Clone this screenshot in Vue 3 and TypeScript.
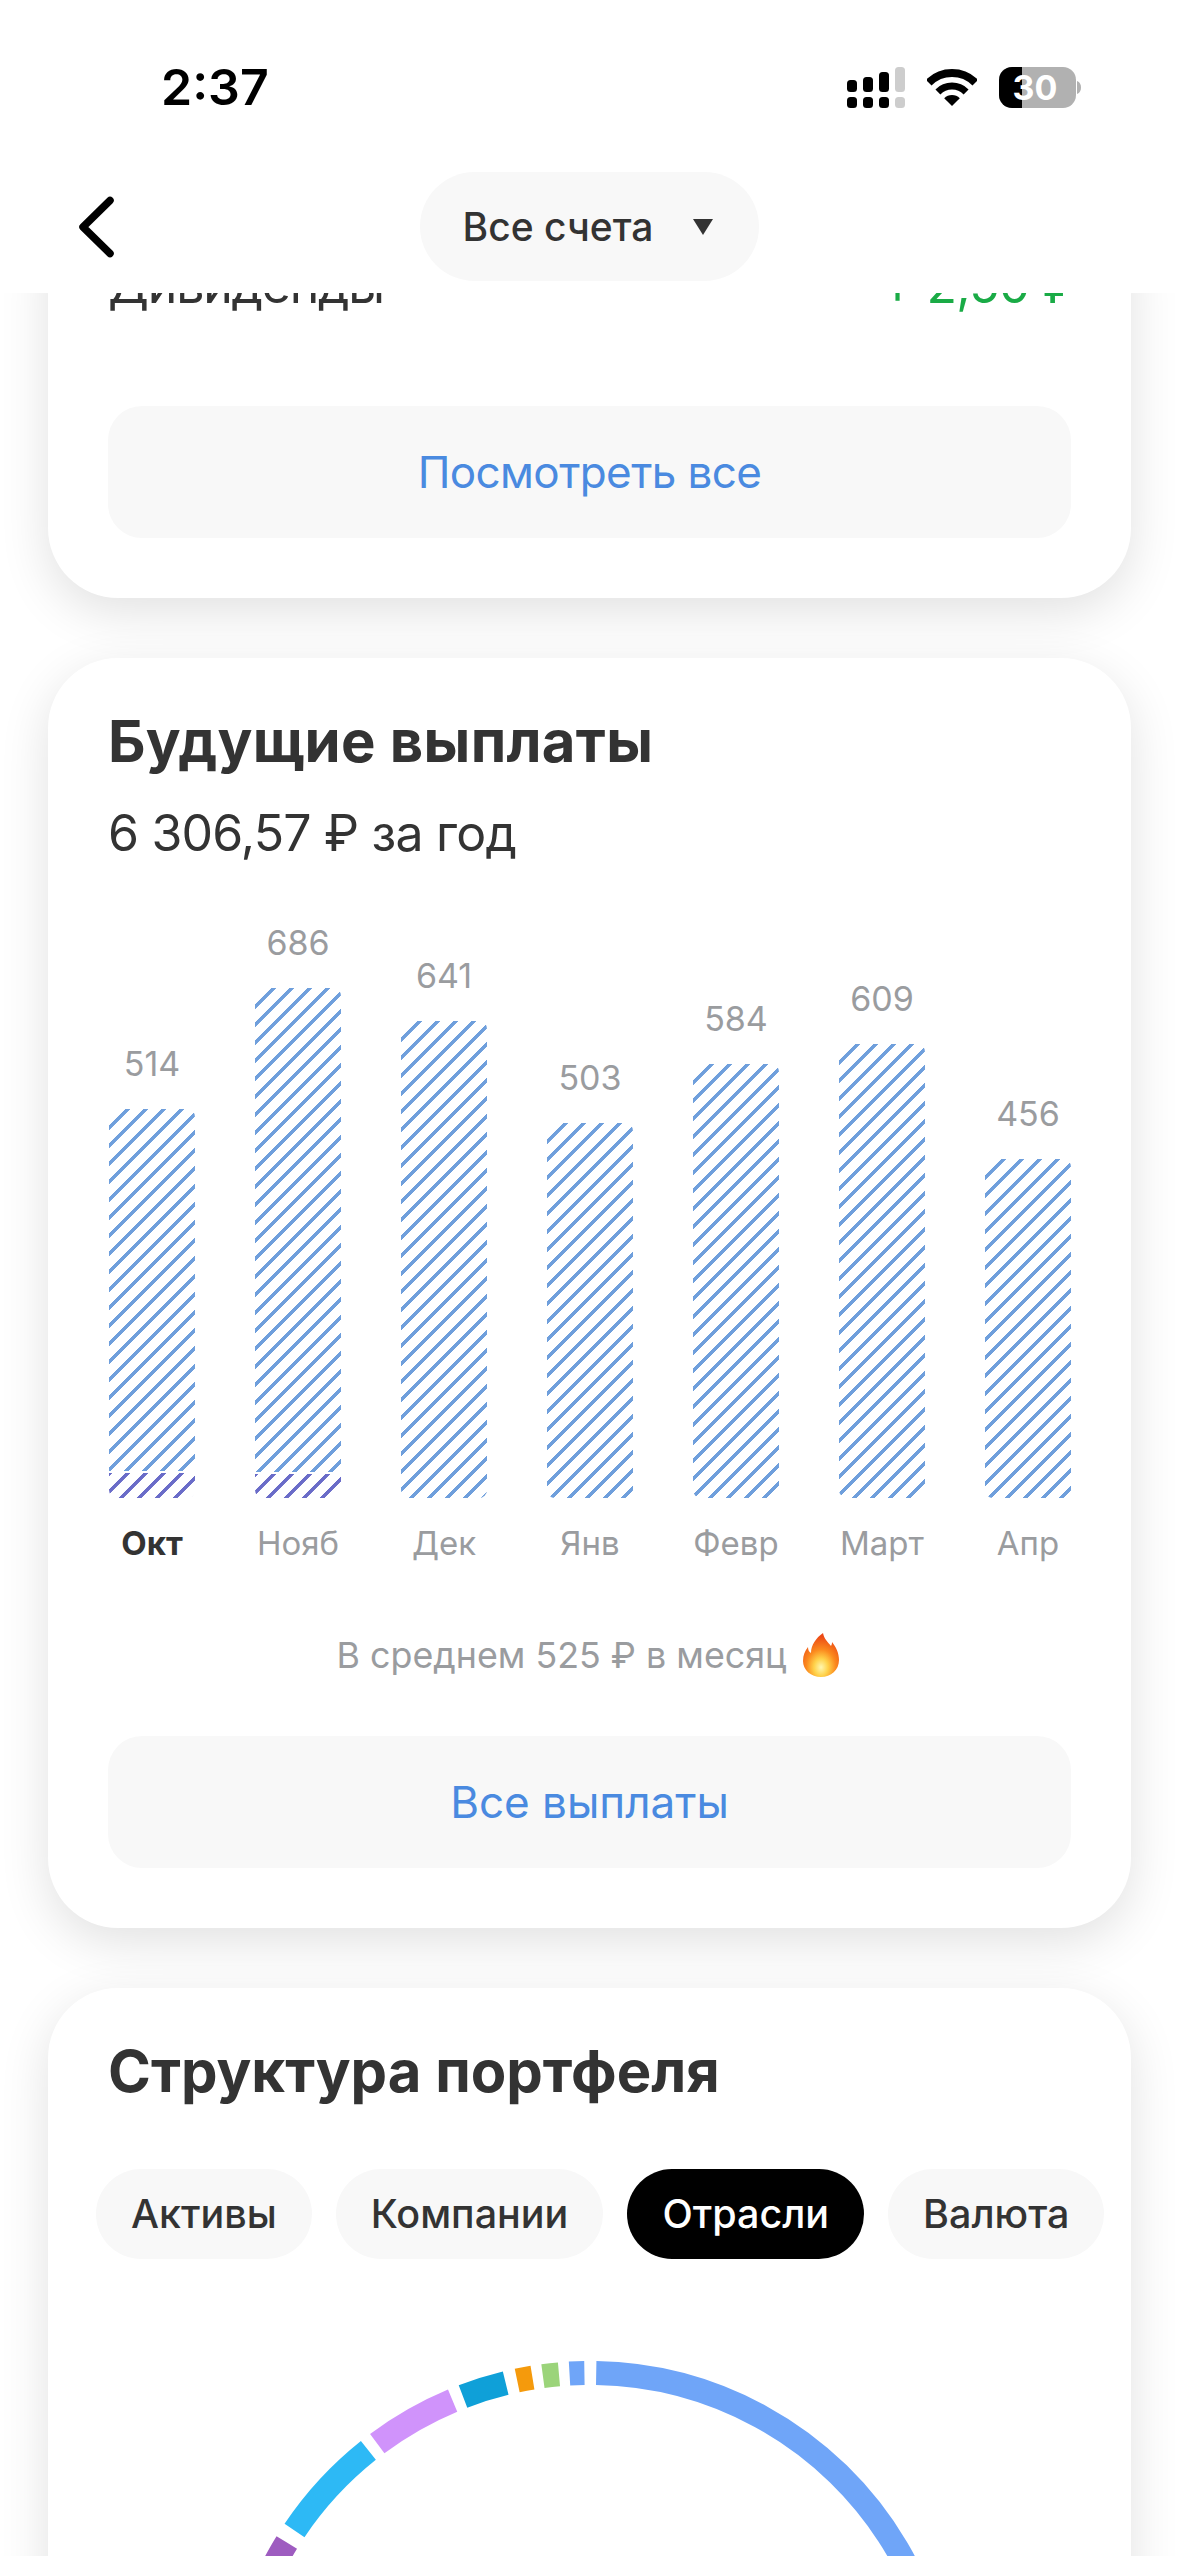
<script setup lang="ts">
interface Bar { value: number; month: string; height: number; part: number; active?: boolean }

const bars: Bar[] = [
  { value: 514, month: 'Окт', height: 389, part: 25, active: true },
  { value: 686, month: 'Нояб', height: 510, part: 24 },
  { value: 641, month: 'Дек', height: 477, part: 0 },
  { value: 503, month: 'Янв', height: 375, part: 0 },
  { value: 584, month: 'Февр', height: 434, part: 0 },
  { value: 609, month: 'Март', height: 454, part: 0 },
  { value: 456, month: 'Апр', height: 339, part: 0 },
]

const tabs = ['Активы', 'Компании', 'Отрасли', 'Валюта']
const activeTab = 'Отрасли'

const cx = 368
const cy = 368
const midR = 356

function point(deg: number): string {
  const a = (deg * Math.PI) / 180
  return `${(cx + midR * Math.sin(a)).toFixed(2)} ${(cy - midR * Math.cos(a)).toFixed(2)}`
}

function arc(from: number, to: number): string {
  const large = to - from > 180 ? 1 : 0
  return `M ${point(from)} A ${midR} ${midR} 0 ${large} 1 ${point(to)}`
}

const segments = [
  { from: 1, to: 120, color: '#6fa5f8' },
  { from: -3.3, to: -0.9, color: '#6fa5f8' },
  { from: -7.6, to: -5, color: '#9bd47a' },
  { from: -11.8, to: -9.3, color: '#f59a0c' },
  { from: -20.9, to: -13.7, color: '#0fa0d8' },
  { from: -36.7, to: -22.7, color: '#d093fb' },
  { from: -56.1, to: -38.5, color: '#2db9f5' },
  { from: -75, to: -58.4, color: '#9e5cc0' },
].map((s) => ({ d: arc(s.from, s.to), color: s.color }))
</script>

<template>
  <div class="screen">
    <header class="top">
      <div class="status">
        <span class="time">2:37</span>
        <div class="status-icons">
          <svg width="58" height="41" viewBox="0 0 58 41">
            <g fill="#000">
              <rect x="0" y="13" width="10" height="12" rx="3.5" />
              <rect x="16" y="10" width="10" height="15" rx="3.5" />
              <rect x="32" y="5" width="10" height="20" rx="3.5" />
              <rect x="0" y="30" width="10" height="11" rx="3.5" />
              <rect x="16" y="30" width="10" height="11" rx="3.5" />
              <rect x="32" y="30" width="10" height="11" rx="3.5" />
            </g>
            <g fill="#cdcdcd">
              <rect x="48" y="0" width="10" height="25" rx="3.5" />
              <rect x="48" y="30" width="10" height="11" rx="3.5" />
            </g>
          </svg>
          <svg width="50" height="37" viewBox="0 0 50 37">
            <path d="M1.7 13.7A33 33 0 0 1 48.3 13.7" fill="none" stroke="#000" stroke-width="8" />
            <path d="M10.9 22.9A20 20 0 0 1 39.1 22.9" fill="none" stroke="#000" stroke-width="7" />
            <path d="M25 37L17.2 29.2A11 11 0 0 1 32.8 29.2Z" fill="#000" />
          </svg>
          <svg width="82" height="41" viewBox="0 0 82 41">
            <defs>
              <clipPath id="battery-shape"><rect width="77" height="41" rx="13" /></clipPath>
            </defs>
            <g clip-path="url(#battery-shape)">
              <rect width="77" height="41" fill="#b1b1b1" />
              <rect width="23" height="41" fill="#000" />
            </g>
            <path d="M78 14C81 15 82 18 82 20.5S81 26 78 27Z" fill="#b1b1b1" />
            <text x="36" y="33" text-anchor="middle" class="battery-text">30</text>
          </svg>
        </div>
      </div>
      <nav class="nav">
        <svg class="back" width="40" height="64" viewBox="0 0 40 64">
          <path d="M36 5.5L9 32L36 58.5" fill="none" stroke="#000" stroke-width="7.5" stroke-linecap="round" stroke-linejoin="round" />
        </svg>
        <button class="account">
          <span>Все счета</span>
          <svg width="22" height="16" viewBox="0 0 22 16"><path d="M1 0H21L11 16Z" fill="#333" /></svg>
        </button>
      </nav>
    </header>

    <main class="viewport">
      <div class="content">
        <section class="card">
          <div class="row">
            <span class="label">Дивиденды</span>
            <span class="plus">+ 2,50 ₽</span>
          </div>
          <button class="action tight">Посмотреть все</button>
        </section>

        <section class="card">
          <h2 class="title">Будущие выплаты</h2>
          <p class="subtitle">6 306,57 ₽ за год</p>
          <div class="chart">
            <div v-for="bar in bars" :key="bar.month" class="col">
              <span class="value">{{ bar.value }}</span>
              <div class="bar" :style="{ height: bar.height + 'px' }">
                <div class="stripes"></div>
                <div v-if="bar.part" class="stripes paid" :style="{ height: bar.part + 'px' }"></div>
              </div>
              <span class="month" :class="{ current: bar.active }">{{ bar.month }}</span>
            </div>
          </div>
          <div class="average">
            <span>В среднем 525 ₽ в месяц</span>
            <svg width="36" height="44" viewBox="0 0 36 44">
              <defs>
                <radialGradient id="flame" cx="50%" cy="78%" r="70%">
                  <stop offset="0%" stop-color="#fff7b0" />
                  <stop offset="28%" stop-color="#ffd24a" />
                  <stop offset="58%" stop-color="#fb8a1e" />
                  <stop offset="100%" stop-color="#ec4a16" />
                </radialGradient>
              </defs>
              <path d="M20 0C21 6 25 9 28 13C29 11 29 10 29 9C33 14 36 20 36 27C36 37 28 44 18 44C8 44 0 37 0 28C0 22 2 18 5 14C5 17 6 19 8 20C8 12 13 5 20 0Z" fill="url(#flame)" />
            </svg>
          </div>
          <button class="action">Все выплаты</button>
        </section>

        <section class="card">
          <h2 class="title structure">Структура портфеля</h2>
          <div class="tabs">
            <span v-for="tab in tabs" :key="tab" class="tab" :class="{ selected: tab === activeTab }">{{ tab }}</span>
          </div>
          <svg class="donut" width="736" height="736" viewBox="0 0 736 736">
            <path v-for="s in segments" :key="s.d" :d="s.d" fill="none" :stroke="s.color" stroke-width="24" />
          </svg>
        </section>
      </div>
    </main>
  </div>
</template>

<style>
html, body { margin: 0; background: #fff; }
</style>

<style scoped>
.screen {
  width: 1179px;
  height: 2556px;
  overflow: hidden;
  background: #fff;
  color: #333;
  font-family: Inter, "Noto Sans", sans-serif;
  display: flex;
  flex-direction: column;
}
.top {
  height: 293px;
  flex: none;
  background: #fff;
}
.status {
  display: flex;
  justify-content: space-between;
  align-items: center;
  height: 41px;
  padding: 67px 98px 0 161px;
}
.time {
  color: #000;
  font-size: 50px;
  font-weight: 600;
  line-height: 41px;
}
.status-icons {
  display: flex;
  align-items: center;
  gap: 22px;
}
.battery-text {
  fill: #fff;
  font-size: 34px;
  font-weight: 700;
  font-family: Inter, sans-serif;
}
.nav {
  display: grid;
  grid-template-columns: 1fr auto 1fr;
  align-items: center;
  margin-top: 64px;
  padding: 0 74px;
}
.back { display: block; }
.account {
  display: flex;
  align-items: center;
  gap: 39px;
  height: 109px;
  padding: 0 45px 0 43px;
  border: 0;
  border-radius: 55px;
  background: #f8f8f8;
  color: #333;
  font: 500 39px Inter, sans-serif;
}
.viewport {
  flex: 1;
  min-height: 0;
  overflow: hidden;
}
.content {
  margin-top: -98px;
  padding: 0 48px;
  display: flex;
  flex-direction: column;
  gap: 60px;
}
.card {
  position: relative;
  background: #fff;
  border-radius: 70px;
  padding: 60px;
  box-shadow: 0 14px 50px rgba(0, 0, 0, 0.12);
}
.card:nth-child(1) { z-index: 3; }
.card:nth-child(2) { z-index: 2; }
.card:nth-child(3) { z-index: 1; padding-bottom: 0; height: 1000px; box-sizing: border-box; }
.row {
  display: flex;
  justify-content: space-between;
  font-size: 50px;
  line-height: 60px;
  margin-right: -6px;
}
.label { letter-spacing: -1.2px; }
.plus {
  color: #1aab46;
  letter-spacing: -0.8px;
}
.action {
  display: block;
  width: 100%;
  height: 132px;
  margin-top: 91px;
  border: 0;
  border-radius: 34px;
  background: #f8f8f8;
  color: #4a8ae0;
  font: 400 44px Inter, sans-serif;
}
.action.tight { letter-spacing: -0.6px; }
.title {
  margin: -11px 0 0;
  font-size: 58px;
  font-weight: 700;
  line-height: 68px;
  letter-spacing: 0.3px;
  color: #333;
}
.subtitle {
  margin: 28px 0 0;
  font-size: 50px;
  font-weight: 400;
  line-height: 60px;
  letter-spacing: -0.8px;
}
.chart {
  display: flex;
  justify-content: space-between;
  align-items: flex-end;
  margin-top: 60px;
  padding-left: 1px;
}
.col {
  width: 86px;
  display: flex;
  flex-direction: column;
  align-items: center;
}
.value {
  color: #9a9c9f;
  font-size: 34px;
  line-height: 40px;
  margin-bottom: 25px;
}
.bar {
  width: 86px;
  display: flex;
  flex-direction: column;
  gap: 2px;
  border-radius: 8px;
  overflow: hidden;
}
.stripes {
  flex: 1;
  min-height: 0;
  background-image: repeating-linear-gradient(135deg, #6f9fdc 0, #6f9fdc 2.1px, transparent 2.4px, transparent 11.3px, #6f9fdc 11.6px, #6f9fdc 12.73px);
}
.paid {
  flex: none;
  background-image: repeating-linear-gradient(135deg, #6a6cc8 0, #6a6cc8 2.1px, transparent 2.4px, transparent 11.3px, #6a6cc8 11.6px, #6a6cc8 12.73px);
}
.month {
  width: 146px;
  text-align: center;
  color: #9a9c9f;
  font-size: 33px;
  line-height: 40px;
  margin-top: 25px;
}
.month.current {
  color: #333;
  font-weight: 700;
}
.average {
  display: flex;
  justify-content: center;
  align-items: center;
  gap: 17px;
  margin-top: 70px;
  padding-right: 3px;
  color: #9a9c9f;
  font-size: 35.8px;
  line-height: 44px;
}
.average + .action { margin-top: 59px; }
.structure {
  margin-top: -11px;
  letter-spacing: 0;
}
.tabs {
  display: flex;
  gap: 24px;
  margin: 64px -30px 0 -12px;
}
.tab {
  display: flex;
  align-items: center;
  height: 90px;
  padding: 0 35px;
  border-radius: 45px;
  background: #f8f8f8;
  color: #333;
  font-size: 39.5px;
  font-weight: 500;
}
.tab.selected {
  background: #000;
  color: #fff;
}
.donut {
  display: block;
  margin: 102px auto 0;
}
</style>
